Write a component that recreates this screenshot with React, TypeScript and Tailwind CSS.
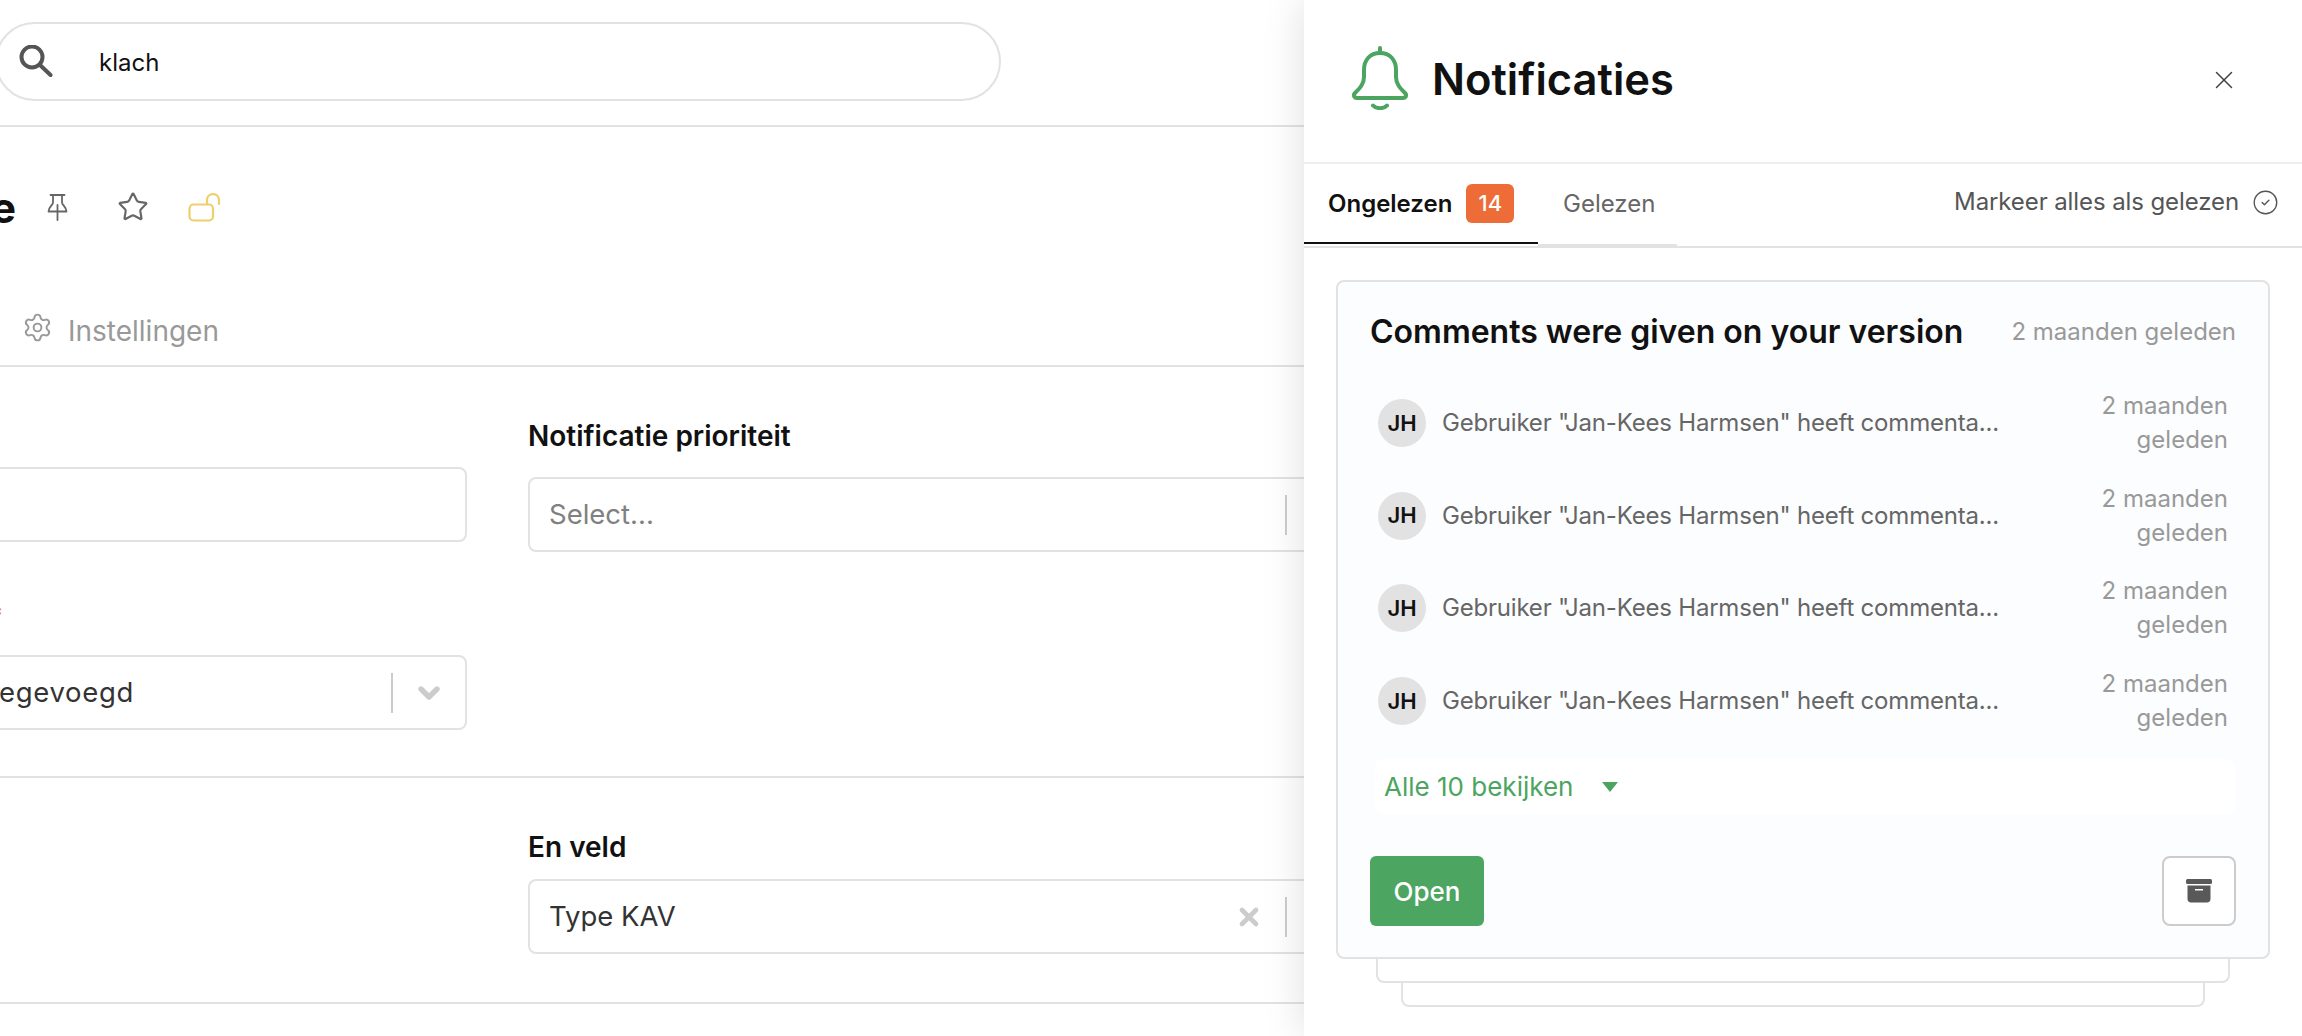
import { Star, Settings, X, CircleCheck, ChevronDown } from "lucide-react";

function Bell() {
  return (
    <svg width="56" height="64" viewBox="0 0 56 64" fill="none" stroke="#4ba560" strokeWidth="4" strokeLinecap="round" strokeLinejoin="round">
      <path d="M28 7C18 7 12 14 12 24V31C12 38 8 42 3 47C1 49 2 52 5 52H51C54 52 55 49 53 47C48 42 44 38 44 31V24C44 14 38 7 28 7Z" />
      <path d="M28 2V7" />
      <path d="M21 59.5C24 63 32 63 35 59.5" />
    </svg>
  );
}

function SearchGlass() {
  return (
    <svg width="34" height="32" viewBox="0 0 34 32" fill="none" stroke="#555555" strokeWidth="4" strokeLinecap="round">
      <circle cx="13" cy="12" r="10.5" />
      <path d="M21 20L31.5 30" />
    </svg>
  );
}

function Thumbtack() {
  return (
    <svg width="21" height="27" viewBox="0 0 21 27" fill="none" stroke="#666666" strokeWidth="1.8" strokeLinejoin="round" strokeLinecap="round">
      <path d="M3.5 1H17.5" />
      <path d="M6 1V8.5C6 11 1.5 13 1.5 17.5H19.5C19.5 13 15 11 15 8.5V1" />
      <path d="M10.5 11V26" />
    </svg>
  );
}

function OpenLock() {
  return (
    <svg width="33" height="29" viewBox="0 0 33 29" fill="none" stroke="#eecf6b" strokeWidth="2.2" strokeLinecap="round">
      <rect x="1.5" y="11.5" width="23.5" height="16" rx="4" />
      <path d="M19 11V7C19 3.5 21.5 1.2 25 1.2C28.5 1.2 31 3.5 31 7V11" />
    </svg>
  );
}

function ArchiveBox() {
  return (
    <svg width="26" height="24" viewBox="0 0 26 24" fill="#595959">
      <rect x="0" y="0" width="26" height="5" rx="1.5" />
      <path d="M1.5 6.5H24.5V20C24.5 22 23 23.5 21 23.5H5C3 23.5 1.5 22 1.5 20ZM9 10V11.5H17V10Z" fillRule="evenodd" />
    </svg>
  );
}

function Field({ text, muted, clear, chevron, textClass }: { text?: string; muted?: boolean; clear?: boolean; chevron?: boolean; textClass?: string }) {
  return (
    <div className="flex h-[75px] items-center rounded-lg border-2 border-[#e2e2e2] bg-white">
      <span className={`flex-1 text-[27.5px] ${muted ? "text-[#808080]" : "text-[#333333]"} ${textClass ?? "pl-[19px]"}`}>{text}</span>
      {clear && <X size={28} strokeWidth={4} className="mr-[22px] text-[#cccccc]" />}
      {text !== undefined && <div className="h-[40px] w-[2px] bg-[#cccccc]" />}
      {text !== undefined && (
        <div className="flex w-[72px] justify-center">
          {chevron && <ChevronDown size={32} strokeWidth={4} className="text-[#cccccc]" />}
        </div>
      )}
    </div>
  );
}

function CommentRow() {
  return (
    <div className="flex h-[68px] items-center pl-[8px] pr-[8px]">
      <div className="flex h-[48px] w-[48px] shrink-0 items-center justify-center rounded-full bg-[#e2e2e2] text-[22px] font-semibold text-[#111111]">
        JH
      </div>
      <div className="ml-[16px] whitespace-nowrap text-[24px] tracking-[-0.2px] text-[#666666]">
        Gebruiker "Jan-Kees Harmsen" heeft commenta...
      </div>
      <div className="ml-auto w-[140px] text-right text-[24px] leading-[34px] text-[#999999]">2 maanden geleden</div>
    </div>
  );
}

export default function App() {
  return (
    <div className="relative h-[1036px] w-[2302px] overflow-hidden bg-white font-['Inter',sans-serif]">
      <header className="h-[127px] border-b-2 border-[#e2e2e2] pt-[22px]">
        <div className="-ml-[5px] flex h-[79px] w-[1006px] items-center rounded-full border-2 border-[#e2e2e2]">
          <div className="ml-[22px] mt-[-2px]">
            <SearchGlass />
          </div>
          <span className="ml-[46px] mt-[2px] text-[24px] text-[#111111]">klach</span>
        </div>
      </header>

      <div className="flex h-[146px] items-center pt-[14px]">
        <h1 className="-ml-[207px] w-[223px] text-right text-[42px] font-bold text-[#111111]">Notificatie</h1>
        <div className="ml-[31px]">
          <Thumbtack />
        </div>
        <Star size={32} strokeWidth={1.6} className="ml-[49px] text-[#666666]" />
        <div className="ml-[39px]">
          <OpenLock />
        </div>
      </div>

      <div className="flex h-[94px] items-center border-b-2 border-[#e2e2e2] pl-[22px] pt-[22px]">
        <div className="mt-[-6px]">
          <Settings size={31} strokeWidth={1.5} className="text-[#999999]" />
        </div>
        <span className="ml-[15px] mt-[2px] text-[28px] text-[#999999]">Instellingen</span>
      </div>

      <section className="-ml-[366px] grid h-[411px] grid-cols-[833px_833px] gap-x-[61px] border-b-2 border-[#e2e2e2]">
        <div className="pt-[100px]">
          <Field />
          <div className="mt-[58px] h-[31px] pr-[464px] text-right text-[26px] font-semibold leading-[31px] text-[#ee6c38]">*</div>
          <div className="mt-[24px]">
            <Field text="egevoegd" chevron textClass="pl-[363px] tracking-[0.7px]" />
          </div>
        </div>
        <div className="pt-[53px]">
          <label className="block text-[28px] font-semibold leading-[32px] text-[#111111]">Notificatie prioriteit</label>
          <div className="mt-[25px]">
            <Field text="Select..." muted />
          </div>
        </div>
      </section>

      <section className="-ml-[366px] grid h-[226px] grid-cols-[833px_833px] gap-x-[61px] border-b-2 border-[#e2e2e2]">
        <div />
        <div className="pt-[53px]">
          <label className="block text-[28px] font-semibold leading-[32px] text-[#111111]">En veld</label>
          <div className="mt-[16px]">
            <Field text="Type KAV" clear />
          </div>
        </div>
      </section>

      <aside className="absolute right-0 top-0 h-full w-[998px] bg-white shadow-[0_0_40px_rgba(0,0,0,0.13)]">
        <div className="flex h-[164px] items-center border-b-2 border-[#eeeeee] pl-[48px] pr-[63px]">
          <div className="-mt-[6px]">
            <Bell />
          </div>
          <h2 className="-mt-[3px] ml-[24px] text-[43.5px] font-semibold text-[#111111]">Notificaties</h2>
          <X size={30} strokeWidth={1.2} className="-mt-[3px] ml-auto text-[#444444]" />
        </div>

        <div className="flex h-[84px] border-b-2 border-[#e2e2e2]">
          <div className="flex h-[80px] w-[234px] items-center border-b-2 border-[#111111] pl-[24px]">
            <span className="mt-[1px] text-[24px] font-semibold text-[#111111]">Ongelezen</span>
            <span className="ml-[14px] flex h-[39px] w-[48px] items-center justify-center rounded-md bg-[#ee6c38] text-[22px] font-medium text-white">14</span>
          </div>
          <div className="flex h-[82px] w-[139px] items-center border-b-2 border-[#e2e2e2] pl-[25px]">
            <span className="text-[24px] text-[#666666]">Gelezen</span>
          </div>
          <div className="ml-auto flex items-center pb-[6px] pr-[23px]">
            <span className="text-[24px] tracking-[-0.1px] text-[#555555]">Markeer alles als gelezen</span>
            <CircleCheck size={27} strokeWidth={1.2} className="ml-[13px] text-[#555555]" />
          </div>
        </div>

        <div className="ml-[32px] mt-[32px] w-[934px]">
          <div className="relative rounded-lg border-2 border-[#e2e2e2] bg-[#fcfdfe] px-[32px] pb-[31px] pt-[26px]">
            <div className="flex items-center justify-between">
              <h3 className="text-[32px] font-semibold text-[#111111]">Comments were given on your version</h3>
              <span className="text-[24px] text-[#999999]">2 maanden geleden</span>
            </div>
            <div className="mt-[33px] flex flex-col gap-[24.7px]">
              <CommentRow />
              <CommentRow />
              <CommentRow />
              <CommentRow />
            </div>
            <div className="ml-[5px] mr-[1px] mt-[24px] flex h-[55px] items-center rounded-lg bg-white px-[9px] text-[26px] text-[#4ba560]">
              Alle 10 bekijken
              <span className="ml-[29px] h-0 w-0 border-x-[8px] border-t-[10px] border-x-transparent border-t-[#4ba560]" />
            </div>
            <div className="mt-[42px] flex items-center justify-between">
              <button className="h-[70px] w-[114px] rounded-md bg-[#4ca662] text-[26px] font-medium text-white">Open</button>
              <button className="flex h-[70px] w-[74px] items-center justify-center rounded-lg border-2 border-[#cccccc] bg-white">
                <ArchiveBox />
              </button>
            </div>
          </div>
          <div className="mx-[40px] h-[24px] rounded-b-lg border-x-2 border-b-2 border-[#e2e2e2]" />
          <div className="mx-[65px] h-[24px] rounded-b-lg border-x-2 border-b-2 border-[#e2e2e2]" />
        </div>
      </aside>
    </div>
  );
}
